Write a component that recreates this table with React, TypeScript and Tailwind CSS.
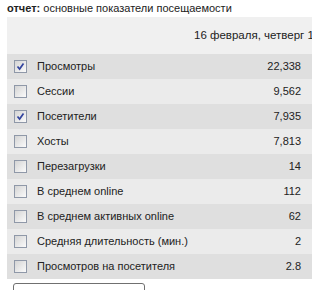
const rows = [
  { label: 'Просмотры', value: '22,338', checked: true },
  { label: 'Сессии', value: '9,562', checked: false },
  { label: 'Посетители', value: '7,935', checked: true },
  { label: 'Хосты', value: '7,813', checked: false },
  { label: 'Перезагрузки', value: '14', checked: false },
  { label: 'В среднем online', value: '112', checked: false },
  { label: 'В среднем активных online', value: '62', checked: false },
  { label: 'Средняя длительность (мин.)', value: '2', checked: false },
  { label: 'Просмотров на посетителя', value: '2.8', checked: false },
]

function Check({ on }: { on: boolean }) {
  return (
    <span className="w-[13px] h-[13px] shrink-0 border border-[#8f98a8] bg-gradient-to-br from-[#d4d4d4] to-[#fbfbfb] flex items-center justify-center">
      {on && (
        <svg width="9" height="9" viewBox="0 0 9 9">
          <path d="M1.5 4.5 L3.6 7 L7.5 1.5" fill="none" stroke="#33449e" strokeWidth="1.7" />
        </svg>
      )}
    </span>
  )
}

export default function App() {
  return (
    <div className="w-[312px] h-[290px] overflow-hidden bg-white text-[11px] text-[#222] font-['Liberation_Sans',Arial,sans-serif]">
      <div className="pl-[7px] pt-[2px] h-[17px] leading-[13px] whitespace-nowrap">
        <b>отчет:</b> основные показатели посещаемости
      </div>

      <div className="ml-[7px] w-[320px]">
        {/* шапка с датой */}
        <div className="h-[37px] bg-[#f0f0f0] pl-[187px] text-[11.5px] leading-[37px] whitespace-nowrap overflow-hidden">
          16 февраля, четверг 17:00
        </div>

        {rows.map((r, i) => (
          <div
            key={r.label}
            className={`h-[25px] flex items-center pl-[7px] pr-[26px] ${i % 2 === 0 ? 'bg-[#dfdfdf]' : 'bg-[#ebebeb]'}`}
          >
            <Check on={r.checked} />
            <span className="ml-[10px] flex-1">{r.label}</span>
            <span>{r.value}</span>
          </div>
        ))}
      </div>

      <div className="ml-[13px] mt-[4px] w-[132px] h-[20px] border border-[#707070] rounded-[3px]" />
    </div>
  )
}
